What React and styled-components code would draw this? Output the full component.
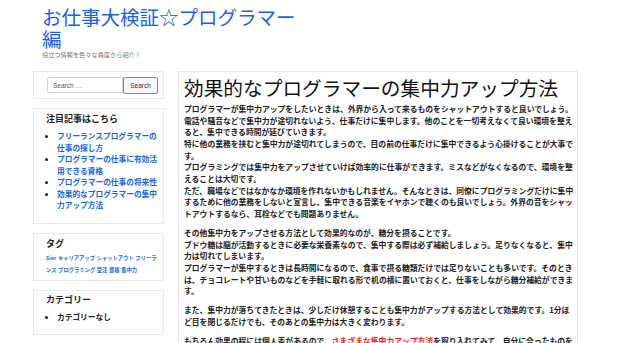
import React from "react";
import styled, { createGlobalStyle } from "styled-components";

const Global = createGlobalStyle`
  html, body { margin: 0; padding: 0; background: #fff; }
  body { font-family: "Noto Sans CJK JP", "Liberation Sans", sans-serif; color: #222; }
  * { box-sizing: border-box; }
`;

const Page = styled.div`
  width: 620px;
  overflow: hidden;
`;

const Header = styled.header`
  padding: 6px 0 0 42px;
  height: 71px;
`;

const SiteTitle = styled.h1`
  margin: 0;
  width: 262px;
  font-size: 19.5px;
  line-height: 22px;
  font-weight: 400;
  color: #1a5ff0;
`;

const Tagline = styled.p`
  margin: 1px 0 0;
  font-size: 6.2px;
  line-height: 8px;
  color: #777;
`;

const Columns = styled.div`
  display: flex;
  align-items: flex-start;
  gap: 14px;
  padding-left: 33px;
`;

const Sidebar = styled.aside`
  width: 131px;
  display: flex;
  flex-direction: column;
  gap: 9px;
`;

const Widget = styled.section`
  border: 1px solid #e6e9ed;
  background: #fff;
  padding: ${(p) => p.$pad || "4px 5px 12px 12px"};
`;

const SearchForm = styled.form`
  display: flex;
  padding: 5px 0 4px 1px;
`;

const SearchInput = styled.input`
  width: 76px;
  height: 16px;
  border: 1px solid #d0d0d0;
  border-radius: 2px 0 0 2px;
  padding: 0 0 0 5px;
  font-family: "Liberation Sans", Arial, sans-serif;
  font-size: 6.5px;
  color: #444;
  outline: none;
  &::placeholder { color: #555; }
`;

const SearchButton = styled.button`
  width: 37px;
  height: 17px;
  border: 1px solid #8a8a8a;
  border-radius: 2px;
  background: #f6f6f6;
  padding: 0;
  font-family: "Liberation Sans", Arial, sans-serif;
  font-size: 6.5px;
  color: #333;
`;

const WidgetTitle = styled.h2`
  margin: 0;
  font-size: 9px;
  line-height: 12px;
  font-weight: 700;
  color: #222;
`;

const List = styled.ul`
  margin: 5px 0 0;
  padding: 0 0 0 11px;
  font-size: 7.7px;
  line-height: 11.5px;
  font-weight: 700;
  li::marker { color: #222; font-size: 7px; }
`;

const Item = styled.li``;

const Link = styled.a`
  color: #1565e8;
  text-decoration: none;
`;

const TagCloud = styled.div`
  margin-top: 2px;
  font-size: 5.3px;
  line-height: 12.5px;
  font-weight: 700;
`;

const Tag = styled.a`
  color: #1565e8;
  text-decoration: none;
  margin-right: 1.6px;
`;

const Main = styled.main`
  width: 400px;
  border: 1px solid #e6e9ed;
  padding: 4px 3px 20px 5px;
  background: #fff;
`;

const PostTitle = styled.h1`
  margin: 0 0 3px;
  font-size: 19.7px;
  line-height: 24px;
  font-weight: 400;
  color: #111;
  white-space: nowrap;
`;

const Para = styled.p`
  margin: 0 0 7.3px;
  width: 391px;
  font-size: 7.8px;
  line-height: 11.67px;
  font-weight: 700;
  color: #222;
`;

const RedLink = styled.a`
  color: #ff1a1a;
  text-decoration: none;
`;

const featured = [
  "フリーランスプログラマーの仕事の探し方",
  "プログラマーの仕事に有効活用できる資格",
  "プログラマーの仕事の将来性",
  "効果的なプログラマーの集中力アップ方法",
];

const tags = ["Sier", "キャリアアップ", "シャットアウト", "フリーランス", "プログラミング", "受注", "資格", "集中力"];

export default function App() {
  return (
    <Page>
      <Global />
      <Header>
        <SiteTitle>お仕事大検証☆プログラマー編</SiteTitle>
        <Tagline>役立つ情報を色々な角度から紹介！</Tagline>
      </Header>
      <Columns>
        <Sidebar>
          <Widget $pad="0 5px 0 12px">
            <SearchForm onSubmit={(e) => e.preventDefault()}>
              <SearchInput placeholder="Search …" />
              <SearchButton type="submit">Search</SearchButton>
            </SearchForm>
          </Widget>
          <Widget>
            <WidgetTitle>注目記事はこちら</WidgetTitle>
            <List>
              {featured.map((t) => (
                <Item key={t}><Link href="#">{t}</Link></Item>
              ))}
            </List>
          </Widget>
          <Widget $pad="4px 5px 3px 12px">
            <WidgetTitle>タグ</WidgetTitle>
            <TagCloud>
              {tags.map((t) => (
                <Tag key={t} href="#">{t}</Tag>
              ))}
            </TagCloud>
          </Widget>
          <Widget $pad="3px 5px 12px 12px">
            <WidgetTitle>カテゴリー</WidgetTitle>
            <List>
              <Item>カテゴリーなし</Item>
            </List>
          </Widget>
        </Sidebar>
        <Main>
          <PostTitle>効果的なプログラマーの集中力アップ方法</PostTitle>
          <Para>
            プログラマーが集中力アップをしたいときは、外界から入って来るものをシャットアウトすると良いでしょう。<br />
            電話や騒音などで集中力が途切れないよう、仕事だけに集中します。他のことを一切考えなくて良い環境を整えると、集中できる時間が延びていきます。<br />
            特に他の業務を挟むと集中力が途切れてしまうので、目の前の仕事だけに集中できるよう心掛けることが大事です。<br />
            プログラミングでは集中力をアップさせていけば効率的に仕事ができます。ミスなどがなくなるので、環境を整えることは大切です。<br />
            ただ、職場などではなかなか環境を作れないかもしれません。そんなときは、同僚にプログラミングだけに集中するために他の業務をしないと宣言し、集中できる音楽をイヤホンで聴くのも良いでしょう。外界の音をシャットアウトするなら、耳栓などでも問題ありません。
          </Para>
          <Para>
            その他集中力をアップさせる方法として効果的なのが、糖分を摂ることです。<br />
            ブドウ糖は脳が活動するときに必要な栄養素なので、集中する際は必ず補給しましょう。足りなくなると、集中力は切れてしまいます。<br />
            プログラマーが集中するときは長時間になるので、食事で摂る糖類だけでは足りないことも多いです。そのときは、チョコレートや甘いものなどを手軽に取れる形で机の横に置いておくと、仕事をしながら糖分補給ができます。
          </Para>
          <Para>
            また、集中力が落ちてきたときは、少しだけ休憩することも集中力がアップする方法として効果的です。1分ほど目を閉じるだけでも、そのあとの集中力は大きく変わります。
          </Para>
          <Para>
            もちろん効果の程には個人差があるので、<RedLink href="#">さまざまな集中力アップ方法</RedLink>を取り入れてみて、自分に合ったものを見つけてください。
          </Para>
        </Main>
      </Columns>
    </Page>
  );
}
